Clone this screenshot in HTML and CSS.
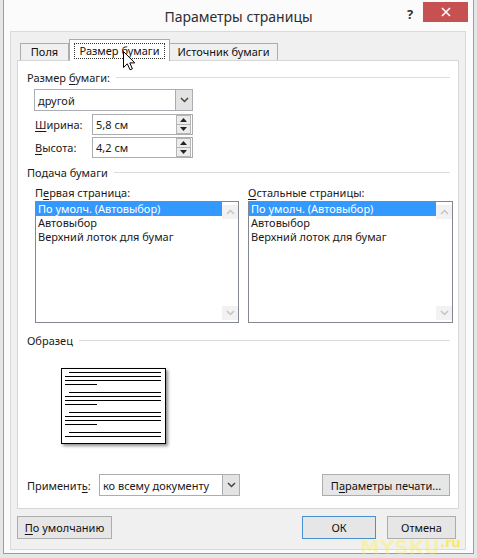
FILE: index.html
```html
<!DOCTYPE html>
<html lang="ru">
<head>
<meta charset="utf-8">
<title>Параметры страницы</title>
<link rel="stylesheet" href="styles.css">
</head>
<body>
<div class="window">
  <div class="titlebar">
    <span class="title">Параметры страницы</span>
    <span class="help">?</span>
    <span class="close"><svg width="10" height="10" viewBox="0 0 10 10"><path d="M1 1L9 9M9 1L1 9" stroke="#fff" stroke-width="1.6"/></svg></span>
  </div>
  <div class="client">
    <div class="tabs">
      <div class="tab tab-first">Поля</div>
      <div class="tab tab-active"><span class="focus">Размер бумаги</span></div>
      <div class="tab tab-last">Источник бумаги</div>
    </div>
    <div class="panel">
      <div class="group-head"><span>Размер <u>б</u>умаги:</span><i class="rule"></i></div>
      <div class="combo combo-size">
        <span class="combo-text">другой</span>
        <span class="drop"><svg width="9" height="6" viewBox="0 0 9 6"><path d="M1 1L4.5 4.5L8 1" fill="none" stroke="#444" stroke-width="1.5"/></svg></span>
      </div>
      <div class="field-row">
        <span class="field-label"><u>Ш</u>ирина:</span>
        <div class="spin"><span class="spin-text">5,8 см</span><span class="spin-btns"><span class="sb"><svg width="7" height="4" viewBox="0 0 7 4"><path d="M0 4L3.5 0L7 4Z" fill="#222"/></svg></span><span class="sb"><svg width="7" height="4" viewBox="0 0 7 4"><path d="M0 0L3.5 4L7 0Z" fill="#222"/></svg></span></span></div>
      </div>
      <div class="field-row field-row2">
        <span class="field-label"><u>В</u>ысота:</span>
        <div class="spin"><span class="spin-text">4,2 см</span><span class="spin-btns"><span class="sb"><svg width="7" height="4" viewBox="0 0 7 4"><path d="M0 4L3.5 0L7 4Z" fill="#222"/></svg></span><span class="sb"><svg width="7" height="4" viewBox="0 0 7 4"><path d="M0 0L3.5 4L7 0Z" fill="#222"/></svg></span></span></div>
      </div>

      <div class="group-head group-feed"><span>Подача бумаги</span><i class="rule"></i></div>
      <div class="feed">
        <div class="feed-col">
          <div class="feed-label">П<u>е</u>рвая страница:</div>
          <div class="listbox">
            <div class="items">
              <div class="item selected">По умолч. (Автовыбор)</div>
              <div class="item">Автовыбор</div>
              <div class="item">Верхний лоток для бумаг</div>
            </div>
            <div class="vscroll">
              <span class="arrow"><svg width="9" height="6" viewBox="0 0 9 6"><path d="M1 5L4.5 1.5L8 5" fill="none" stroke="#c4c4c4" stroke-width="1.5"/></svg></span>
              <span class="arrow"><svg width="9" height="6" viewBox="0 0 9 6"><path d="M1 1L4.5 4.5L8 1" fill="none" stroke="#c4c4c4" stroke-width="1.5"/></svg></span>
            </div>
          </div>
        </div>
        <div class="feed-col">
          <div class="feed-label"><u>О</u>стальные страницы:</div>
          <div class="listbox">
            <div class="items">
              <div class="item selected">По умолч. (Автовыбор)</div>
              <div class="item">Автовыбор</div>
              <div class="item">Верхний лоток для бумаг</div>
            </div>
            <div class="vscroll">
              <span class="arrow"><svg width="9" height="6" viewBox="0 0 9 6"><path d="M1 5L4.5 1.5L8 5" fill="none" stroke="#c4c4c4" stroke-width="1.5"/></svg></span>
              <span class="arrow"><svg width="9" height="6" viewBox="0 0 9 6"><path d="M1 1L4.5 4.5L8 1" fill="none" stroke="#c4c4c4" stroke-width="1.5"/></svg></span>
            </div>
          </div>
        </div>
      </div>

      <div class="group-head group-sample"><span>Образец</span><i class="rule"></i></div>
      <div class="sample">
        <svg width="103" height="74" viewBox="0 0 103 74">
          <g stroke="#000" stroke-width="1">
            <path d="M7 3.5H99M3 7.5H99M3 11.5H99M3 15.5H35"/>
            <path d="M7 23.5H99M3 27.5H99M3 31.5H99M3 35.5H35"/>
            <path d="M7 43.5H99M3 47.5H99M3 51.5H99M3 55.5H35"/>
            <path d="M7 63.5H99M3 67.5H99"/>
          </g>
        </svg>
      </div>

      <div class="apply-row">
        <span class="apply-label">Применит<u>ь</u>:</span>
        <div class="combo combo-apply">
          <span class="combo-text">ко всему документу</span>
          <span class="drop"><svg width="9" height="6" viewBox="0 0 9 6"><path d="M1 1L4.5 4.5L8 1" fill="none" stroke="#444" stroke-width="1.5"/></svg></span>
        </div>
        <button class="btn btn-print">П<u>а</u>раметры печати...</button>
      </div>
    </div>
    <div class="buttons">
      <button class="btn btn-default"><u>П</u>о умолчанию</button>
      <span class="spacer"></span>
      <button class="btn btn-ok">ОК</button>
      <button class="btn btn-cancel">Отмена</button>
    </div>
  </div>
  <svg class="cursor" width="13" height="20" viewBox="0 0 13 20"><path d="M0.5 0.5V16.5L4.3 12.8L7 18.8L9.4 17.8L6.8 11.9H11.8Z" fill="#fff" stroke="#000" stroke-width="1" stroke-linejoin="round"/></svg>
  <div class="watermark">MYSKU<span class="wm-ru">.ru</span></div>
</div>
</body>
</html>
```

FILE: styles.css
```css
* { box-sizing: border-box; }
html, body { margin: 0; padding: 0; }
body {
  background: #e6e6e6;
  width: 477px;
  height: 558px;
  overflow: hidden;
  font-family: "Noto Sans", "Open Sans", "DejaVu Sans", sans-serif;
  font-size: 11px;
  color: #1a1a1a;
}
u { text-decoration: underline; text-underline-offset: 2px; }

.window {
  position: relative;
  margin-left: 3px;
  width: 471px;
  height: 554px;
  background: #fbfbfb;
  border: 1px solid #9c9c9c;
  border-top: none;
}

.titlebar {
  position: relative;
  height: 31px;
  display: flex;
  align-items: center;
  justify-content: center;
}
.title {
  font-size: 14px;
  color: #2e2e2e;
  margin-top: 1px;
}
.help {
  position: absolute;
  left: 403px;
  top: 5px;
  font-size: 13px;
  font-weight: bold;
  color: #333;
}
.close {
  position: absolute;
  right: 5px;
  top: 2px;
  width: 45px;
  height: 20px;
  background: #c75050;
  display: flex;
  align-items: center;
  justify-content: center;
}

.client {
  margin-left: 6px;
  width: 456px;
  height: 519px;
  background: #f0f0f0;
  border: 1px solid #dadada;
  padding: 7px 5px 0 6px;
}

.tabs {
  display: flex;
  align-items: flex-end;
  height: 21px;
  padding-left: 3px;
}
.tab {
  height: 17px;
  border: 1px solid #acacac;
  border-bottom: none;
  background: #f0f0f0;
  display: flex;
  align-items: center;
  justify-content: center;
  line-height: 14px;
  color: #111;
}
.tab-first { width: 49px; }
.tab-active {
  position: relative;
  z-index: 2;
  width: 101px;
  height: 22px;
  margin-bottom: -1px;
  background: #fff;
  align-items: flex-start;
  padding-top: 4px;
}
.focus {
  outline: 1px dotted #333;
  padding: 0 5px;
  line-height: 14px;
}
.tab-last { width: 109px; margin-left: -1px; }

.panel {
  position: relative;
  width: 442px;
  height: 449px;
  background: #fff;
  border: 1px solid #d6d6d6;
  padding: 8px 8px 0 9px;
}

.group-head {
  display: flex;
  align-items: center;
  height: 16px;
  white-space: nowrap;
}
.rule {
  flex: 1;
  height: 1px;
  background: #dcdcdc;
  margin-left: 6px;
}
.group-feed { margin-top: 6px; }
.group-sample { margin-top: 9px; }

.combo {
  display: flex;
  align-items: center;
  height: 22px;
  border: 1px solid #abadb3;
  background: #fff;
}
.combo-text { flex: 1; padding-left: 3px; white-space: nowrap; }
.drop {
  width: 17px;
  height: 100%;
  background: #e3e3e3;
  border-left: 1px solid #acacac;
  display: flex;
  align-items: center;
  justify-content: center;
}
.combo-size {
  margin-top: 4px;
  margin-left: 7px;
  width: 159px;
}

.field-row {
  display: flex;
  align-items: center;
  margin-top: 3px;
  margin-left: 8px;
  height: 21px;
}
.field-row2 { margin-top: 2px; }
.field-label { width: 57px; }
.spin {
  width: 101px;
  height: 21px;
  border: 1px solid #abadb3;
  display: flex;
  align-items: center;
}
.spin-text { flex: 1; padding-left: 3px; }
.spin-btns {
  display: flex;
  flex-direction: column;
  width: 15px;
  height: 19px;
  margin-right: 1px;
}
.sb {
  flex: 1;
  background: #ececec;
  border: 1px solid #b5b5b5;
  display: flex;
  align-items: center;
  justify-content: center;
}
.sb + .sb { border-top: none; }

.feed {
  display: grid;
  grid-template-columns: 204px 205px;
  column-gap: 9px;
  margin-left: 8px;
  margin-top: 5px;
}
.feed-label { height: 16px; line-height: 15px; }
.listbox {
  display: flex;
  height: 122px;
  border: 1px solid #828790;
  background: #fff;
}
.items { flex: 1; padding-top: 0; }
.item {
  height: 14px;
  line-height: 14px;
  padding-left: 2px;
  white-space: nowrap;
  overflow: hidden;
}
.selected { background: #3399ff; color: #fff; }
.vscroll {
  width: 16px;
  display: flex;
  flex-direction: column;
  justify-content: space-between;
  padding: 3px 0 2px;
}
.arrow {
  height: 14px;
  background: #f2f2f2;
  display: flex;
  align-items: center;
  justify-content: center;
}

.sample {
  margin-top: 20px;
  margin-left: 34px;
  width: 105px;
  height: 76px;
  border: 1px solid #000;
  background: #fff;
  box-shadow: 2px 2px 3px rgba(0,0,0,0.45);
}
.sample svg { display: block; }

.apply-row {
  display: flex;
  align-items: center;
  margin-top: 30px;
  height: 22px;
}
.apply-label { width: 72px; }
.combo-apply { width: 141px; }
.btn {
  font-family: inherit;
  font-size: 11px;
  color: #111;
  background: #e6e6e6;
  border: 1px solid #adadad;
  padding: 0;
  height: 22px;
}
.btn-print {
  margin-left: auto;
  width: 128px;
  height: 22px;
}

.buttons {
  display: flex;
  margin-top: 7px;
  padding-right: 4px;
}
.spacer { flex: 1; }
.btn-default { width: 95px; height: 23px; }
.btn-ok { width: 74px; height: 23px; border-color: #4a90d0; }
.btn-cancel { width: 69px; height: 23px; margin-left: 11px; }

.cursor {
  position: absolute;
  left: 119px;
  top: 51px;
  z-index: 5;
}
.watermark {
  position: absolute;
  left: 356px;
  top: 534px;
  font-family: "DejaVu Sans", sans-serif;
  font-weight: bold;
  font-size: 20px;
  line-height: 18px;
  color: rgba(255, 240, 60, 0.35);
  pointer-events: none;
  z-index: 6;
  white-space: nowrap;
}
.wm-ru { font-size: 13px; color: rgba(255, 230, 0, 0.6); vertical-align: 7px; }
```
